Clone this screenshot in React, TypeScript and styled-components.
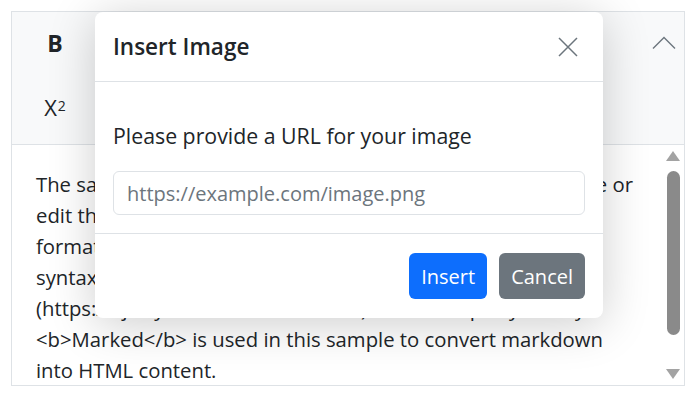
import React from "react";
import styled, { createGlobalStyle } from "styled-components";

const GlobalStyle = createGlobalStyle`
  html, body { margin: 0; padding: 0; background: #ffffff; }
  body { font-family: "Open Sans", "Noto Sans", sans-serif; color: #212529; }
  * { box-sizing: border-box; }
`;

const Page = styled.div`
  width: 700px;
  height: 397px;
  padding: 11px 15px 12px 11px;
  overflow: hidden;
`;

const Editor = styled.div`
  position: relative;
  height: 375px;
  border: 1px solid #dee2e6;
  display: flex;
  flex-direction: column;
  background: #ffffff;
`;

const Toolbar = styled.div`
  background: #f8f9fa;
  border-bottom: 1px solid #dee2e6;
  padding: 11px 0 17px 23px;
  display: flex;
  flex-direction: column;
  gap: 24px;
`;

const ToolRow = styled.div`
  display: flex;
  align-items: center;
  justify-content: space-between;
`;

const ToolButton = styled.div<{ $bold?: boolean }>`
  width: 40px;
  height: 40px;
  display: flex;
  align-items: center;
  justify-content: center;
  font-size: ${(p) => (p.$bold ? "23px" : "22px")};
  font-weight: ${(p) => (p.$bold ? 700 : 400)};
  color: #212529;
  sup { font-size: 14px; position: relative; top: -2px; margin-left: 1px; }
`;

const Content = styled.div`
  flex: 1;
  display: flex;
  min-height: 0;
`;

const Text = styled.div`
  flex: 1;
  padding: 24px 0 0 24px;
  font-size: 20.3px;
  line-height: 31px;
  color: #212529;
  overflow: hidden;
  white-space: nowrap;
`;

const Line = styled.div``;

const Scrollbar = styled.div`
  width: 18px;
  margin-right: 2px;
  display: flex;
  flex-direction: column;
  align-items: center;
  padding: 6px 0;
`;

const Arrow = styled.div<{ $down?: boolean }>`
  width: 0;
  height: 0;
  border-left: 7px solid transparent;
  border-right: 7px solid transparent;
  ${(p) => (p.$down ? "border-top: 10px solid #a3a3a3;" : "border-bottom: 10px solid #a3a3a3;")}
`;

const Track = styled.div`
  flex: 1;
  width: 13px;
  padding-top: 10px;
  display: flex;
  flex-direction: column;
`;

const Thumb = styled.div`
  height: 164px;
  background: #8a8a8a;
  border-radius: 7px;
`;

const Modal = styled.div`
  position: absolute;
  left: 83px;
  top: 0;
  width: 508px;
  background: #ffffff;
  border-radius: 8px;
  box-shadow: 0 6px 48px rgba(0, 0, 0, 0.2);
  display: flex;
  flex-direction: column;
`;

const ModalHeader = styled.div`
  height: 70px;
  padding: 0 24px 0 18px;
  display: flex;
  align-items: center;
  justify-content: space-between;
  border-bottom: 1px solid #dee2e6;
`;

const Title = styled.div`
  font-size: 22.5px;
  font-weight: 600;
  color: #212529;
`;

const CloseButton = styled.div`
  width: 22px;
  height: 22px;
  display: flex;
  align-items: center;
  justify-content: center;
`;

const ModalBody = styled.div`
  padding: 39px 18px 18px;
  display: flex;
  flex-direction: column;
  gap: 20px;
  border-bottom: 1px solid #dee2e6;
`;

const Label = styled.div`
  font-size: 21.3px;
  line-height: 30px;
  color: #212529;
`;

const Input = styled.div`
  height: 44px;
  border: 1px solid #dee2e6;
  border-radius: 6px;
  padding: 0 13px;
  display: flex;
  align-items: center;
  font-size: 20px;
  color: #6c757d;
`;

const ModalFooter = styled.div`
  height: 84px;
  padding: 0 18px;
  display: flex;
  align-items: center;
  justify-content: flex-end;
  gap: 12px;
`;

const Button = styled.div<{ $variant: "primary" | "secondary" }>`
  height: 46px;
  padding: 0 12px;
  border-radius: 6px;
  display: flex;
  align-items: center;
  font-size: 20px;
  color: #ffffff;
  background: ${(p) => (p.$variant === "primary" ? "#0d6efd" : "#6c757d")};
`;

export default function App() {
  return (
    <>
      <GlobalStyle />
      <Page>
        <Editor>
          <Toolbar>
            <ToolRow>
              <ToolButton $bold>B</ToolButton>
              <ToolButton>
                <svg width="24" height="14" viewBox="0 0 24 14" fill="none">
                  <path d="M1 12.5 L12 1.5 L23 12.5" stroke="#6c757d" strokeWidth="1.4" />
                </svg>
              </ToolButton>
            </ToolRow>
            <ToolRow>
              <ToolButton>
                X<sup>2</sup>
              </ToolButton>
            </ToolRow>
          </Toolbar>
          <Content>
            <Text>
              <Line>The sample is added to showcase *markdown editing*. Type or</Line>
              <Line>edit the display text and apply the format to view the</Line>
              <Line>formatted content. Refer the markdown documentation for</Line>
              <Line>syntax details, see [sample link]</Line>
              <Line>(https://ej2.syncfusion.com/home/). The third-party library</Line>
              <Line>&lt;b&gt;Marked&lt;/b&gt; is used in this sample to convert markdown</Line>
              <Line>into HTML content.</Line>
            </Text>
            <Scrollbar>
              <Arrow />
              <Track>
                <Thumb />
              </Track>
              <Arrow $down />
            </Scrollbar>
          </Content>
          <Modal>
            <ModalHeader>
              <Title>Insert Image</Title>
              <CloseButton>
                <svg width="20" height="20" viewBox="0 0 20 20" fill="none">
                  <path d="M1 1 L19 19 M19 1 L1 19" stroke="#6c757d" strokeWidth="1.5" />
                </svg>
              </CloseButton>
            </ModalHeader>
            <ModalBody>
              <Label>Please provide a URL for your image</Label>
              <Input>https://example.com/image.png</Input>
            </ModalBody>
            <ModalFooter>
              <Button $variant="primary">Insert</Button>
              <Button $variant="secondary">Cancel</Button>
            </ModalFooter>
          </Modal>
        </Editor>
      </Page>
    </>
  );
}
